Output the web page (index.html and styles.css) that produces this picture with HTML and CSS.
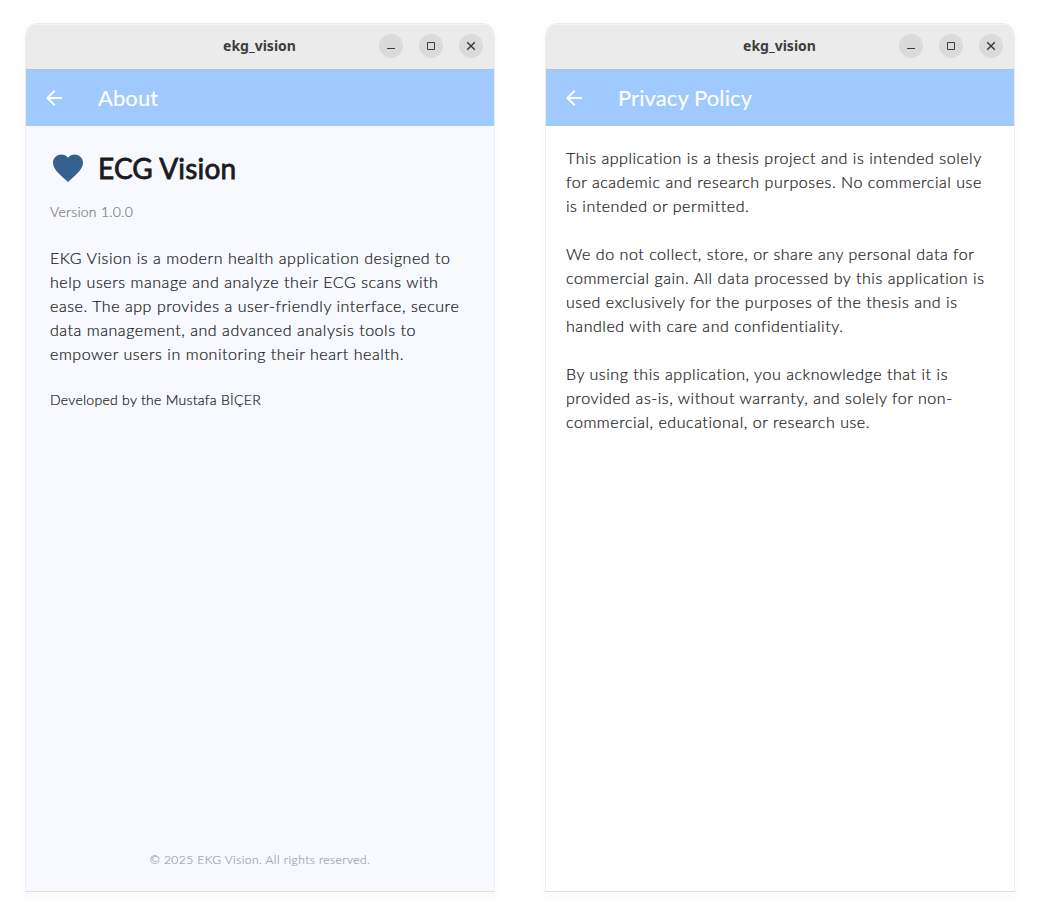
FILE: index.html
```html
<!DOCTYPE html>
<html lang="en">
<head>
<meta charset="utf-8">
<title>ekg_vision</title>
<link rel="stylesheet" href="styles.css">
</head>
<body>
<main class="desktop">
  <section class="window about">
    <header class="titlebar">
      <span class="window-title">ekg_vision</span>
      <div class="controls">
        <span class="control"><svg width="24" height="24"><path d="M8 14.5h8"/></svg></span>
        <span class="control"><svg width="24" height="24"><path d="M8.500 8.500h7v7h-7z"/></svg></span>
        <span class="control"><svg class="close" width="24" height="24"><path d="M8.200 8.200l7.600 7.600M15.800 8.200l-7.600 7.600"/></svg></span>
      </div>
    </header>
    <nav class="appbar">
      <svg class="back" width="24" height="24" viewBox="0 0 24 24"><path d="M20 11H7.830l5.590-5.590L12 4l-8 8 8 8 1.410-1.410L7.830 13H20v-2z"/></svg>
      <h1 class="screen-title">About</h1>
    </nav>
    <div class="content">
      <div class="brand">
        <svg class="heart" width="36" height="36" viewBox="0 0 24 24"><path d="M12 21.350l-1.450-1.320C5.400 15.360 2 12.280 2 8.500 2 5.420 4.420 3 7.500 3c1.740 0 3.410.81 4.500 2.090C13.090 3.810 14.760 3 16.500 3 19.580 3 22 5.420 22 8.500c0 3.780-3.400 6.860-8.550 11.540L12 21.350z"/></svg>
        <h2 class="brand-name">ECG Vision</h2>
      </div>
      <p class="version">Version 1.0.0</p>
      <p class="body-text">EKG Vision is a modern health application designed to<br>help users manage and analyze their ECG scans with<br>ease. The app provides a user-friendly interface, secure<br>data management, and advanced analysis tools to<br>empower users in monitoring their heart health.</p>
      <p class="developer">Developed by the Mustafa BİÇER</p>
      <footer class="copyright">© 2025 EKG Vision. All rights reserved.</footer>
    </div>
  </section>
  <section class="window privacy">
    <header class="titlebar">
      <span class="window-title">ekg_vision</span>
      <div class="controls">
        <span class="control"><svg width="24" height="24"><path d="M8 14.5h8"/></svg></span>
        <span class="control"><svg width="24" height="24"><path d="M8.500 8.500h7v7h-7z"/></svg></span>
        <span class="control"><svg class="close" width="24" height="24"><path d="M8.200 8.200l7.600 7.600M15.800 8.200l-7.600 7.600"/></svg></span>
      </div>
    </header>
    <nav class="appbar">
      <svg class="back" width="24" height="24" viewBox="0 0 24 24"><path d="M20 11H7.830l5.590-5.590L12 4l-8 8 8 8 1.410-1.410L7.830 13H20v-2z"/></svg>
      <h1 class="screen-title">Privacy Policy</h1>
    </nav>
    <div class="content">
      <p class="body-text">This application is a thesis project and is intended solely<br>for academic and research purposes. No commercial use<br>is intended or permitted.</p>
      <p class="body-text">We do not collect, store, or share any personal data for<br>commercial gain. All data processed by this application is<br>used exclusively for the purposes of the thesis and is<br>handled with care and confidentiality.</p>
      <p class="body-text">By using this application, you acknowledge that it is<br>provided as-is, without warranty, and solely for non-<br>commercial, educational, or research use.</p>
    </div>
  </section>
</main>
</body>
</html>
```
FILE: styles.css
```css
* { box-sizing: border-box; }
body { margin: 0; background: #fff; font-family: Lato, sans-serif; }
h1, h2, p { margin: 0; }
.desktop { display: flex; gap: 50px; padding: 23px 25px; width: 1040px; height: 920px; }
.window {
  display: flex; flex-direction: column; width: 470px; height: 869px;
  border: 1px solid #ededee; border-bottom-color: #dfdfe3;
  border-radius: 13px 13px 0 0; overflow: hidden;
  box-shadow: 0 3px 12px rgba(0, 0, 0, .03);
}
.titlebar {
  display: grid; grid-template-columns: 1fr auto 1fr; align-items: center;
  height: 46px; flex: none; padding: 0 11px 2px;
  background: #ebebeb; border-top: 1px solid #f6f6f6; border-bottom: 1px solid #b9bfc8;
}
.window-title { grid-column: 2; font: 700 14px/20px "Noto Sans", sans-serif; color: #3d3d3d; margin-right: 1px; }
.controls { display: flex; gap: 16px; justify-content: flex-end; }
.control { width: 24px; height: 24px; border-radius: 50%; background: #dadada; }
.control svg { display: block; fill: none; stroke: #3d3d3d; stroke-width: 1; }
.control .close { stroke-width: 1.5; }
.appbar { display: flex; align-items: center; gap: 32px; height: 56px; flex: none; padding-left: 16px; background: #a0c9ff; }
.back { fill: #fff; }
.screen-title { font-size: 22px; line-height: 28px; font-weight: 400; letter-spacing: .1px; color: #fff; -webkit-text-stroke: .15px currentColor; }
.content { display: flex; flex-direction: column; flex: 1; padding: 24px; background: #f8f9ff; color: #191c20; font-weight: 300; white-space: nowrap; -webkit-text-stroke: .22px currentColor; }
.privacy .content { padding: 20px; gap: 24px; background: #fff; color: #202020; }
.brand { display: flex; align-items: center; gap: 12px; height: 36px; }
.heart { fill: #36618e; }
.brand-name { font-size: 28px; line-height: 36px; font-weight: 400; letter-spacing: .15px; color: #1b1b20; -webkit-text-stroke: .8px currentColor; }
.version { margin-top: 16px; font-size: 14px; line-height: 20px; letter-spacing: .27px; color: #7c7d80; }
.body-text { font-size: 16px; line-height: 24px; letter-spacing: .55px; }
.about .body-text { margin-top: 24px; }
.developer { margin-top: 24px; font-size: 14px; line-height: 20px; letter-spacing: .28px; }
.copyright { margin: auto 0 -1px; text-align: center; font-size: 12px; line-height: 16px; letter-spacing: .45px; color: #a3a4a8; }
```
